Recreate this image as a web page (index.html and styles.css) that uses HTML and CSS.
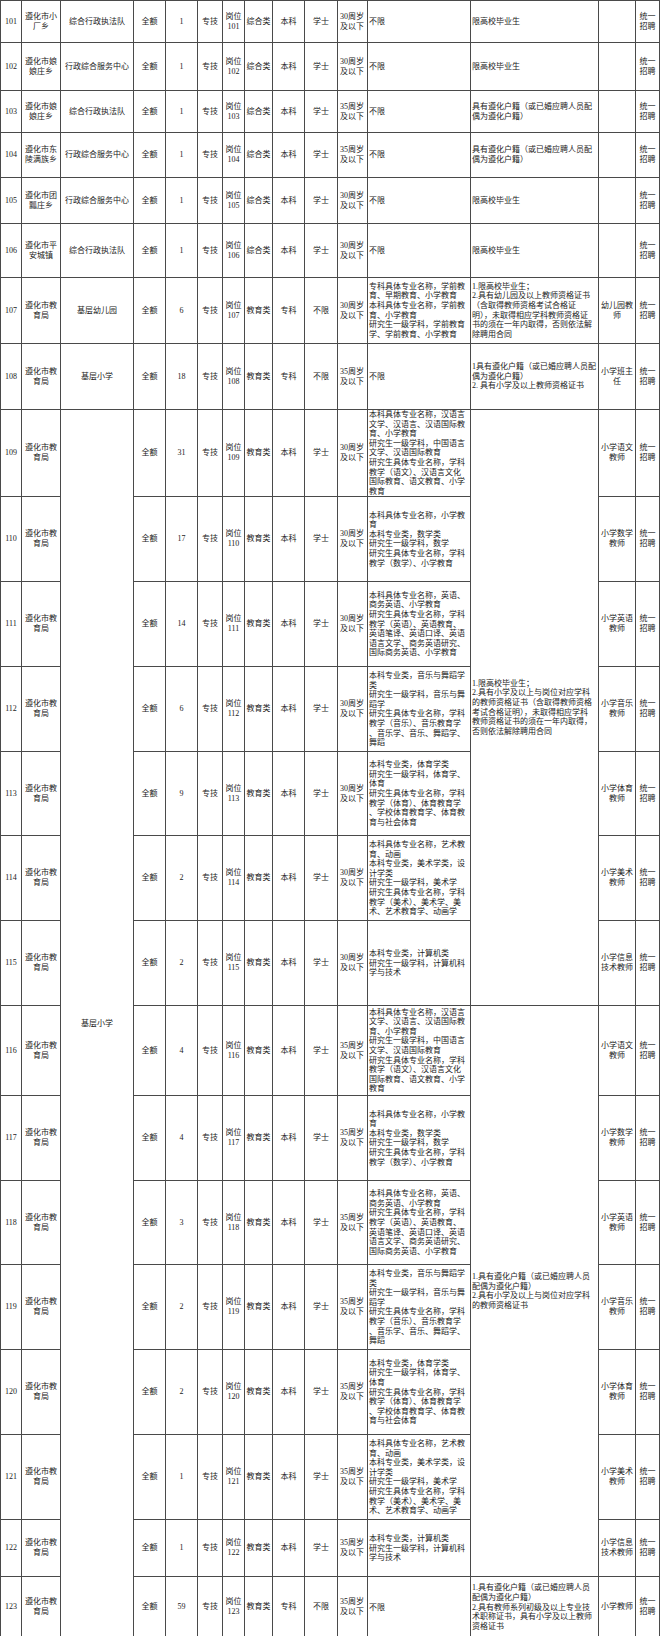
FILE: index.html
```html
<!DOCTYPE html>
<html lang="zh-CN">
<head>
<meta charset="utf-8">
<title>岗位表</title>
<link rel="stylesheet" href="styles.css">
</head>
<body>
<table class="grid">
<colgroup>
<col class="w21"><col class="w39"><col class="w73"><col class="w32"><col class="w32"><col class="w25"><col class="w22"><col class="w28"><col class="w32"><col class="w33"><col class="w30"><col class="w103"><col class="w128"><col class="w37"><col class="w24">
</colgroup>
<tbody>
<tr class="h42"><td>101</td><td>遵化市小<br>厂乡</td><td>综合行政执法队</td><td>全额</td><td>1</td><td>专技</td><td>岗位<br>101</td><td>综合类</td><td>本科</td><td>学士</td><td class="age">30周岁<br>及以下</td><td class="txt">不限</td><td class="txt">限高校毕业生</td><td></td><td>统一<br>招聘</td></tr>
<tr class="h48"><td>102</td><td>遵化市娘<br>娘庄乡</td><td>行政综合服务中心</td><td>全额</td><td>1</td><td>专技</td><td>岗位<br>102</td><td>综合类</td><td>本科</td><td>学士</td><td class="age">30周岁<br>及以下</td><td class="txt">不限</td><td class="txt">限高校毕业生</td><td></td><td>统一<br>招聘</td></tr>
<tr class="h42"><td>103</td><td>遵化市娘<br>娘庄乡</td><td>综合行政执法队</td><td>全额</td><td>1</td><td>专技</td><td>岗位<br>103</td><td>综合类</td><td>本科</td><td>学士</td><td class="age">35周岁<br>及以下</td><td class="txt">不限</td><td class="txt">具有遵化户籍（或已婚应聘人员配<br>偶为遵化户籍）</td><td></td><td>统一<br>招聘</td></tr>
<tr class="h45"><td>104</td><td>遵化市东<br>陵满族乡</td><td>行政综合服务中心</td><td>全额</td><td>1</td><td>专技</td><td>岗位<br>104</td><td>综合类</td><td>本科</td><td>学士</td><td class="age">35周岁<br>及以下</td><td class="txt">不限</td><td class="txt">具有遵化户籍（或已婚应聘人员配<br>偶为遵化户籍）</td><td></td><td>统一<br>招聘</td></tr>
<tr class="h46"><td>105</td><td>遵化市团<br>瓢庄乡</td><td>行政综合服务中心</td><td>全额</td><td>1</td><td>专技</td><td>岗位<br>105</td><td>综合类</td><td>本科</td><td>学士</td><td class="age">30周岁<br>及以下</td><td class="txt">不限</td><td class="txt">限高校毕业生</td><td></td><td>统一<br>招聘</td></tr>
<tr class="h54"><td>106</td><td>遵化市平<br>安城镇</td><td>综合行政执法队</td><td>全额</td><td>1</td><td>专技</td><td>岗位<br>106</td><td>综合类</td><td>本科</td><td>学士</td><td class="age">30周岁<br>及以下</td><td class="txt">不限</td><td class="txt">限高校毕业生</td><td></td><td>统一<br>招聘</td></tr>
<tr class="h66"><td>107</td><td>遵化市教<br>育局</td><td>基层幼儿园</td><td>全额</td><td>6</td><td>专技</td><td>岗位<br>107</td><td>教育类</td><td>专科</td><td>不限</td><td class="age">30周岁<br>及以下</td><td class="txt">专科具体专业名称，学前教<br>育、早期教育、小学教育<br>本科具体专业名称，学前教<br>育、小学教育<br>研究生一级学科，学前教育<br>学、学前教育、小学教育</td><td class="txt">1.限高校毕业生；<br>2.具有幼儿园及以上教师资格证书<br>（含取得教师资格考试合格证<br>明），未取得相应学科教师资格证<br>书的须在一年内取得，否则依法解<br>除聘用合同</td><td>幼儿园教<br>师</td><td>统一<br>招聘</td></tr>
<tr class="h66"><td>108</td><td>遵化市教<br>育局</td><td>基层小学</td><td>全额</td><td>18</td><td>专技</td><td>岗位<br>108</td><td>教育类</td><td>专科</td><td>不限</td><td class="age">35周岁<br>及以下</td><td class="txt">不限</td><td class="txt">1具有遵化户籍（或已婚应聘人员配<br>偶为遵化户籍）<br>2. 具有小学及以上教师资格证书</td><td>小学班主<br>任</td><td>统一<br>招聘</td></tr>
<tr class="h85"><td>109</td><td>遵化市教<br>育局</td><td rowspan="15">基层小学</td><td>全额</td><td>31</td><td>专技</td><td>岗位<br>109</td><td>教育类</td><td>本科</td><td>学士</td><td class="age">30周岁<br>及以下</td><td class="txt">本科具体专业名称，汉语言<br>文学、汉语言、汉语国际教<br>育、小学教育<br>研究生一级学科，中国语言<br>文学、汉语国际教育<br>研究生具体专业名称，学科<br>教学（语文）、汉语言文化<br>国际教育、语文教育、小学<br>教育</td><td class="txt" rowspan="7">1.限高校毕业生；<br>2.具有小学及以上与岗位对应学科<br>的教师资格证书（含取得教师资格<br>考试合格证明），未取得相应学科<br>教师资格证书的须在一年内取得，<br>否则依法解除聘用合同</td><td>小学语文<br>教师</td><td>统一<br>招聘</td></tr>
<tr class="h85"><td>110</td><td>遵化市教<br>育局</td><td>全额</td><td>17</td><td>专技</td><td>岗位<br>110</td><td>教育类</td><td>本科</td><td>学士</td><td class="age">30周岁<br>及以下</td><td class="txt">本科具体专业名称，小学教<br>育<br>本科专业类，数学类<br>研究生一级学科，数学<br>研究生具体专业名称，学科<br>教学（数学）、小学教育</td><td>小学数学<br>教师</td><td>统一<br>招聘</td></tr>
<tr class="h85"><td>111</td><td>遵化市教<br>育局</td><td>全额</td><td>14</td><td>专技</td><td>岗位<br>111</td><td>教育类</td><td>本科</td><td>学士</td><td class="age">30周岁<br>及以下</td><td class="txt">本科具体专业名称，英语、<br>商务英语、小学教育<br>研究生具体专业名称，学科<br>教学（英语）、英语教育、<br>英语笔译、英语口译、英语<br>语言文学、商务英语研究、<br>国际商务英语、小学教育</td><td>小学英语<br>教师</td><td>统一<br>招聘</td></tr>
<tr class="h85"><td>112</td><td>遵化市教<br>育局</td><td>全额</td><td>6</td><td>专技</td><td>岗位<br>112</td><td>教育类</td><td>本科</td><td>学士</td><td class="age">30周岁<br>及以下</td><td class="txt">本科专业类，音乐与舞蹈学<br>类<br>研究生一级学科，音乐与舞<br>蹈学<br>研究生具体专业名称，学科<br>教学（音乐）、音乐教育学<br>、音乐学、音乐、舞蹈学、<br>舞蹈</td><td>小学音乐<br>教师</td><td>统一<br>招聘</td></tr>
<tr class="h84"><td>113</td><td>遵化市教<br>育局</td><td>全额</td><td>9</td><td>专技</td><td>岗位<br>113</td><td>教育类</td><td>本科</td><td>学士</td><td class="age">30周岁<br>及以下</td><td class="txt">本科专业类，体育学类<br>研究生一级学科，体育学、<br>体育<br>研究生具体专业名称，学科<br>教学（体育）、体育教育学<br>、学校体育教育学、体育教<br>育与社会体育</td><td>小学体育<br>教师</td><td>统一<br>招聘</td></tr>
<tr class="h85"><td>114</td><td>遵化市教<br>育局</td><td>全额</td><td>2</td><td>专技</td><td>岗位<br>114</td><td>教育类</td><td>本科</td><td>学士</td><td class="age">30周岁<br>及以下</td><td class="txt">本科具体专业名称，艺术教<br>育、动画<br>本科专业类，美术学类，设<br>计学类<br>研究生一级学科，美术学<br>研究生具体专业名称，学科<br>教学（美术）、美术学、美<br>术、艺术教育学、动画学</td><td>小学美术<br>教师</td><td>统一<br>招聘</td></tr>
<tr class="h85"><td>115</td><td>遵化市教<br>育局</td><td>全额</td><td>2</td><td>专技</td><td>岗位<br>115</td><td>教育类</td><td>本科</td><td>学士</td><td class="age">30周岁<br>及以下</td><td class="txt">本科专业类，计算机类<br>研究生一级学科，计算机科<br>学与技术</td><td>小学信息<br>技术教师</td><td>统一<br>招聘</td></tr>
<tr class="h90"><td>116</td><td>遵化市教<br>育局</td><td>全额</td><td>4</td><td>专技</td><td>岗位<br>116</td><td>教育类</td><td>本科</td><td>学士</td><td class="age">35周岁<br>及以下</td><td class="txt">本科具体专业名称，汉语言<br>文学、汉语言、汉语国际教<br>育、小学教育<br>研究生一级学科，中国语言<br>文学、汉语国际教育<br>研究生具体专业名称，学科<br>教学（语文）、汉语言文化<br>国际教育、语文教育、小学<br>教育</td><td class="txt" rowspan="7">1.具有遵化户籍（或已婚应聘人员<br>配偶为遵化户籍）<br>2.具有小学及以上与岗位对应学科<br>的教师资格证书</td><td>小学语文<br>教师</td><td>统一<br>招聘</td></tr>
<tr class="h85"><td>117</td><td>遵化市教<br>育局</td><td>全额</td><td>4</td><td>专技</td><td>岗位<br>117</td><td>教育类</td><td>本科</td><td>学士</td><td class="age">35周岁<br>及以下</td><td class="txt">本科具体专业名称，小学教<br>育<br>本科专业类，数学类<br>研究生一级学科，数学<br>研究生具体专业名称，学科<br>教学（数学）、小学教育</td><td>小学数学<br>教师</td><td>统一<br>招聘</td></tr>
<tr class="h84"><td>118</td><td>遵化市教<br>育局</td><td>全额</td><td>3</td><td>专技</td><td>岗位<br>118</td><td>教育类</td><td>本科</td><td>学士</td><td class="age">35周岁<br>及以下</td><td class="txt">本科具体专业名称，英语、<br>商务英语、小学教育<br>研究生具体专业名称，学科<br>教学（英语）、英语教育、<br>英语笔译、英语口译、英语<br>语言文学、商务英语研究、<br>国际商务英语、小学教育</td><td>小学英语<br>教师</td><td>统一<br>招聘</td></tr>
<tr class="h85"><td>119</td><td>遵化市教<br>育局</td><td>全额</td><td>2</td><td>专技</td><td>岗位<br>119</td><td>教育类</td><td>本科</td><td>学士</td><td class="age">35周岁<br>及以下</td><td class="txt">本科专业类，音乐与舞蹈学<br>类<br>研究生一级学科，音乐与舞<br>蹈学<br>研究生具体专业名称，学科<br>教学（音乐）、音乐教育学<br>、音乐学、音乐、舞蹈学、<br>舞蹈</td><td>小学音乐<br>教师</td><td>统一<br>招聘</td></tr>
<tr class="h85"><td>120</td><td>遵化市教<br>育局</td><td>全额</td><td>2</td><td>专技</td><td>岗位<br>120</td><td>教育类</td><td>本科</td><td>学士</td><td class="age">35周岁<br>及以下</td><td class="txt">本科专业类，体育学类<br>研究生一级学科，体育学、<br>体育<br>研究生具体专业名称，学科<br>教学（体育）、体育教育学<br>、学校体育教育学、体育教<br>育与社会体育</td><td>小学体育<br>教师</td><td>统一<br>招聘</td></tr>
<tr class="h85"><td>121</td><td>遵化市教<br>育局</td><td>全额</td><td>1</td><td>专技</td><td>岗位<br>121</td><td>教育类</td><td>本科</td><td>学士</td><td class="age">35周岁<br>及以下</td><td class="txt">本科具体专业名称，艺术教<br>育、动画<br>本科专业类，美术学类，设<br>计学类<br>研究生一级学科，美术学<br>研究生具体专业名称，学科<br>教学（美术）、美术学、美<br>术、艺术教育学、动画学</td><td>小学美术<br>教师</td><td>统一<br>招聘</td></tr>
<tr class="h57"><td>122</td><td>遵化市教<br>育局</td><td>全额</td><td>1</td><td>专技</td><td>岗位<br>122</td><td>教育类</td><td>本科</td><td>学士</td><td class="age">35周岁<br>及以下</td><td class="txt">本科专业类，计算机类<br>研究生一级学科，计算机科<br>学与技术</td><td>小学信息<br>技术教师</td><td>统一<br>招聘</td></tr>
<tr class="h61"><td>123</td><td>遵化市教<br>育局</td><td>全额</td><td>59</td><td>专技</td><td>岗位<br>123</td><td>教育类</td><td>专科</td><td>不限</td><td class="age">35周岁<br>及以下</td><td class="txt">不限</td><td class="txt">1.具有遵化户籍（或已婚应聘人员<br>配偶为遵化户籍）<br>2.具有教师系列初级及以上专业技<br>术职称证书，具有小学及以上教师<br>资格证书</td><td>小学教师</td><td>统一<br>招聘</td></tr>
</tbody>
</table>
</body>
</html>
```
FILE: styles.css
```css
html, body {
  margin: 0;
  padding: 0;
  background: #ffffff;
}

.grid {
  border-collapse: collapse;
  table-layout: fixed;
  width: 660px;
  font-family: "Liberation Serif", "Noto Sans CJK SC", serif;
  font-size: 8px;
  line-height: 10px;
  color: #222222;
}

.grid td {
  border: 1px solid #4a4a4a;
  padding: 0;
  text-align: center;
  vertical-align: middle;
  white-space: nowrap;
  overflow: visible;
}

.grid td.age {
  text-align: left;
  padding-left: 2px;
}

.grid td.txt {
  text-align: left;
  padding-left: 1px;
  line-height: 9.6px;
}

.w21 { width: 21px; }
.w39 { width: 39px; }
.w73 { width: 73px; }
.w32 { width: 32px; }
.w25 { width: 25px; }
.w22 { width: 22px; }
.w28 { width: 28px; }
.w33 { width: 33px; }
.w30 { width: 30px; }
.w103 { width: 103px; }
.w128 { width: 128px; }
.w37 { width: 37px; }
.w24 { width: 24px; }

.h42 { height: 42px; }
.h45 { height: 45px; }
.h46 { height: 46px; }
.h48 { height: 48px; }
.h54 { height: 54px; }
.h57 { height: 57px; }
.h61 { height: 61px; }
.h66 { height: 66px; }
.h84 { height: 84px; }
.h85 { height: 85px; }
.h90 { height: 90px; }
```
